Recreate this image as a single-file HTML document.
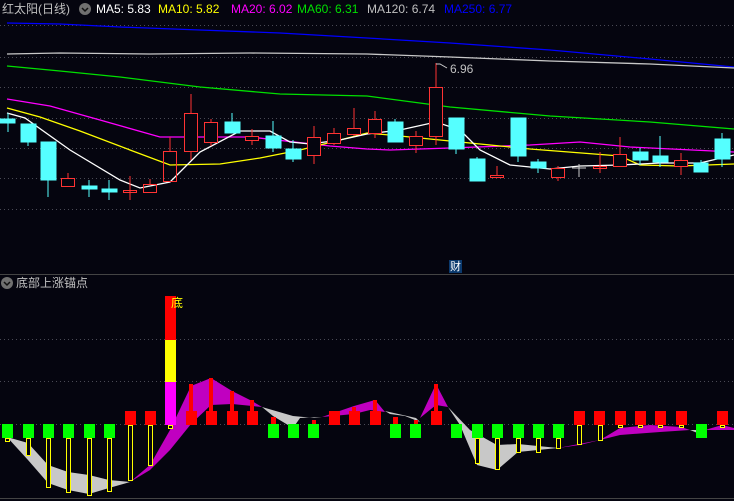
<!DOCTYPE html>
<html><head><meta charset="utf-8"><style>
html,body{margin:0;padding:0;background:#05050f;}
body{width:734px;height:501px;overflow:hidden;position:relative;font-family:"Liberation Sans","Noto Sans CJK SC",sans-serif;}
.t{position:absolute;font-size:12px;line-height:14px;white-space:nowrap;}
</style></head><body>
<svg width="734" height="501" style="position:absolute;left:0;top:0" shape-rendering="crispEdges">
<g stroke="#4a4a55" stroke-dasharray="1,3" stroke-width="1">
<line x1="0" y1="25.5" x2="734" y2="25.5"/><line x1="0" y1="57.5" x2="734" y2="57.5"/>
<line x1="0" y1="87.5" x2="734" y2="87.5"/><line x1="0" y1="118.5" x2="734" y2="118.5"/>
<line x1="0" y1="148.5" x2="734" y2="148.5"/><line x1="0" y1="178.5" x2="734" y2="178.5"/>
<line x1="0" y1="209.5" x2="734" y2="209.5"/>
<line x1="0" y1="339.5" x2="734" y2="339.5"/><line x1="0" y1="381.5" x2="734" y2="381.5"/>
<line x1="0" y1="424.5" x2="734" y2="424.5"/>
</g>
<line x1="0" y1="274.5" x2="734" y2="274.5" stroke="#444" />
<line x1="0" y1="498.5" x2="734" y2="498.5" stroke="#444" />
<g fill="none" stroke-width="1.3" shape-rendering="auto">
<polyline stroke="#0000ff" points="7,23 60,24 120,27 200,30 280,33 367,38 450,43 550,50 650,59 734,67"/>
<polyline stroke="#c8c8c8" points="7,54 60,53 150,54 250,53 367,54 450,57 550,61 650,64 734,68"/>
<polyline stroke="#00e000" points="7,66 60,71 120,77 200,87 280,94 367,96 450,107 550,116 650,122 734,129"/>
<polyline stroke="#ff00ff" points="7,99 50,106 100,120 160,137 250,137 330,146 367,149 390,150 450,148 530,145 580,142 630,147 734,152"/>
<polyline stroke="#ffff00" points="7,108 40,117 80,131 130,150 170,165 220,164 260,158 300,150 340,140 367,133 400,136 430,139 470,143 530,149 620,156 640,165 680,166 734,164"/>
<polyline stroke="#ffffff" points="7,113 25,118 70,150 120,180 140,188 170,182 200,152 240,131 270,131 290,142 310,144 340,140 367,134 400,130 436,122 460,130 480,150 510,165 550,169 580,166 620,165 660,163 700,163 734,155"/>
</g>
<g stroke-width="1">
<!-- cyan candles -->
<g stroke="#55ffff" fill="#55ffff">
<line x1="8" y1="113" x2="8" y2="132"/><rect x="0" y="119" width="15" height="4"/>
<line x1="28" y1="124" x2="28" y2="146"/><rect x="21" y="124" width="15" height="18"/>
<line x1="48" y1="142" x2="48" y2="197"/><rect x="41" y="142" width="15" height="38"/>
<line x1="89" y1="180" x2="89" y2="197"/><rect x="82" y="186" width="15" height="3"/>
<line x1="109" y1="180" x2="109" y2="200"/><rect x="102" y="189" width="15" height="3"/>
<line x1="232" y1="113" x2="232" y2="133"/><rect x="225" y="122" width="15" height="11"/>
<line x1="273" y1="121" x2="273" y2="152"/><rect x="266" y="136" width="15" height="12"/>
<line x1="293" y1="140" x2="293" y2="162"/><rect x="286" y="149" width="15" height="10"/>
<line x1="395" y1="119" x2="395" y2="142"/><rect x="388" y="122" width="15" height="20"/>
<line x1="456" y1="118" x2="456" y2="154"/><rect x="449" y="118" width="15" height="31"/>
<line x1="477" y1="157" x2="477" y2="181"/><rect x="470" y="159" width="15" height="22"/>
<line x1="518" y1="118" x2="518" y2="162"/><rect x="511" y="118" width="15" height="38"/>
<line x1="538" y1="159" x2="538" y2="173"/><rect x="531" y="162" width="15" height="6"/>
<line x1="640" y1="148" x2="640" y2="165"/><rect x="633" y="152" width="15" height="8"/>
<line x1="660" y1="136" x2="660" y2="167"/><rect x="653" y="156" width="15" height="6"/>
<line x1="701" y1="160" x2="701" y2="172"/><rect x="694" y="163" width="14" height="9"/>
<line x1="722" y1="133" x2="722" y2="167"/><rect x="715" y="139" width="15" height="20"/>
</g>
<!-- red candles -->
<g stroke="#ff3333" fill="none">
<line x1="68" y1="173" x2="68" y2="178"/><rect x="61.5" y="178.5" width="13" height="8"/>
<line x1="130" y1="176" x2="130" y2="200"/><rect x="123.5" y="190.5" width="13" height="2"/>
<line x1="150" y1="179" x2="150" y2="184"/><rect x="143.5" y="184.5" width="13" height="8"/>
<line x1="170" y1="137" x2="170" y2="151"/><rect x="163.5" y="151.5" width="13" height="30"/>
<line x1="191" y1="94" x2="191" y2="160"/><rect x="184.5" y="113.5" width="13" height="38" fill="#05050f"/>
<line x1="211" y1="119" x2="211" y2="146"/><rect x="204.5" y="122.5" width="13" height="20" fill="#05050f"/>
<line x1="252" y1="129" x2="252" y2="145"/><rect x="245.5" y="136.5" width="13" height="4" fill="#05050f"/>
<line x1="314" y1="126" x2="314" y2="164"/><rect x="307.5" y="137.5" width="13" height="18" fill="#05050f"/>
<line x1="334" y1="128" x2="334" y2="145"/><rect x="327.5" y="133.5" width="13" height="10" fill="#05050f"/>
<line x1="354" y1="108" x2="354" y2="136"/><rect x="347.5" y="128.5" width="13" height="6" fill="#05050f"/>
<line x1="375" y1="111" x2="375" y2="138"/><rect x="368.5" y="119.5" width="13" height="14" fill="#05050f"/>
<line x1="416" y1="131" x2="416" y2="153"/><rect x="409.5" y="136.5" width="13" height="9" fill="#05050f"/>
<line x1="436" y1="63" x2="436" y2="145"/><rect x="429.5" y="87.5" width="13" height="49" fill="#05050f"/>
<line x1="497" y1="166" x2="497" y2="175"/><rect x="490.5" y="175.5" width="13" height="2"/>
<line x1="558" y1="166" x2="558" y2="181"/><rect x="551.5" y="168.5" width="13" height="9" fill="#05050f"/>
<line x1="600" y1="152" x2="600" y2="173"/><rect x="593.5" y="166.5" width="13" height="2"/>
<line x1="620" y1="137" x2="620" y2="167"/><rect x="613.5" y="154.5" width="13" height="12" fill="#05050f"/>
<line x1="681" y1="153" x2="681" y2="175"/><rect x="674.5" y="160.5" width="13" height="6" fill="#05050f"/>
</g>
<line x1="579" y1="164" x2="579" y2="177" stroke="#ccc"/><line x1="572" y1="168" x2="586" y2="168" stroke="#ccc"/>
</g>
<polyline points="436,64 440,64 447,68" fill="none" stroke="#ccc" shape-rendering="auto"/>
<rect x="449" y="260" width="13" height="13" fill="#0b3a6e"/>

<!-- bottom panel fills -->
<g shape-rendering="auto">
<polygon fill="#c8c8c8" points="7,437 28,443 48,465 68,472 89,475 109,480 130,482 109,488 89,494 68,490 48,483 28,460"/>
<polygon fill="#c000c0" points="130,482 150,465 170,430 191,386 211,378 232,391 252,401 262,407 232,404 211,405 191,424 170,450 150,470"/>
<polygon fill="#c8c8c8" points="262,407 293,416 314,418 322,417 300,418 293,428 273,416"/>
<polygon fill="#c000c0" points="322,417 354,406 375,400 385,412 370,410 354,414"/>
<polygon fill="#c8c8c8" points="385,411 416,418 420,422 405,416 390,414"/>
<polygon fill="#c000c0" points="420,418 436,384 448,407 436,405"/>
<polygon fill="#c8c8c8" points="448,407 470,430 497,445 518,444 558,448 518,452 497,470 477,465 460,425"/>
<polygon fill="#c000c0" points="558,448 600,440 620,428 650,425 681,427 690,430 660,432 620,435 580,445"/>
<polygon fill="#c8c8c8" points="690,430 705,430 700,434"/>
<polygon fill="#c000c0" points="705,430 722,425 734,428 734,430 715,430"/>
</g>
<!-- yellow hollow bars -->
<g fill="#05050f" stroke="#ffff00" stroke-width="1">
<rect x="5.5" y="438.5" width="4" height="3"/>
<rect x="26.5" y="438.5" width="4" height="17"/>
<rect x="46.5" y="438.5" width="4" height="49"/>
<rect x="66.5" y="438.5" width="4" height="54"/>
<rect x="87.5" y="438.5" width="4" height="57"/>
<rect x="107.5" y="438.5" width="4" height="53"/>
<rect x="128.5" y="425.5" width="4" height="55"/>
<rect x="148.5" y="425.5" width="4" height="40"/>
<rect x="168.5" y="425.5" width="4" height="3"/>
<rect x="475.5" y="438.5" width="4" height="25"/>
<rect x="495.5" y="438.5" width="4" height="31"/>
<rect x="516.5" y="438.5" width="4" height="14"/>
<rect x="536.5" y="438.5" width="4" height="14"/>
<rect x="556.5" y="438.5" width="4" height="10"/>
<rect x="577.5" y="425.5" width="4" height="19"/>
<rect x="598.5" y="425.5" width="4" height="15"/>
<rect x="618.5" y="425.5" width="4" height="2"/>
<rect x="638.5" y="425.5" width="4" height="2"/>
<rect x="658.5" y="425.5" width="4" height="2"/>
<rect x="679.5" y="425.5" width="4" height="2"/>
<rect x="720.5" y="425.5" width="4" height="2"/>
</g>
<!-- big bar -->
<rect x="165" y="382" width="11" height="43" fill="#ff00ff"/>
<rect x="165" y="340" width="11" height="42" fill="#ffff00"/>
<rect x="165" y="296" width="11" height="44" fill="#ff0000"/>
<!-- red boxes & bars -->
<g fill="#ff0000">
<rect x="125" y="411" width="11" height="14"/><rect x="145" y="411" width="11" height="14"/>
<rect x="186" y="411" width="11" height="14"/><rect x="189" y="384" width="4" height="27"/>
<rect x="206" y="411" width="11" height="14"/><rect x="209" y="378" width="4" height="33"/>
<rect x="227" y="411" width="11" height="14"/><rect x="230" y="391" width="4" height="20"/>
<rect x="247" y="411" width="11" height="14"/><rect x="250" y="400" width="4" height="11"/>
<rect x="271" y="417" width="5" height="7"/><rect x="312" y="420" width="4" height="4"/>
<rect x="329" y="411" width="11" height="14"/>
<rect x="349" y="411" width="11" height="14"/><rect x="352" y="407" width="4" height="4"/>
<rect x="370" y="411" width="11" height="14"/><rect x="373" y="400" width="4" height="11"/>
<rect x="393" y="417" width="5" height="7"/><rect x="414" y="420" width="4" height="4"/>
<rect x="431" y="411" width="11" height="14"/><rect x="434" y="384" width="4" height="27"/>
<rect x="574" y="411" width="11" height="14"/><rect x="594" y="411" width="11" height="14"/>
<rect x="615" y="411" width="11" height="14"/><rect x="635" y="411" width="11" height="14"/>
<rect x="655" y="411" width="11" height="14"/><rect x="676" y="411" width="11" height="14"/>
<rect x="717" y="411" width="11" height="14"/>
</g>
<g fill="#00ff00">
<rect x="2" y="424" width="11" height="14"/><rect x="23" y="424" width="11" height="14"/>
<rect x="43" y="424" width="11" height="14"/><rect x="63" y="424" width="11" height="14"/>
<rect x="84" y="424" width="11" height="14"/><rect x="104" y="424" width="11" height="14"/>
<rect x="268" y="424" width="11" height="14"/><rect x="288" y="424" width="11" height="14"/>
<rect x="308" y="424" width="11" height="14"/>
<rect x="390" y="424" width="11" height="14"/><rect x="410" y="424" width="11" height="14"/>
<rect x="451" y="424" width="11" height="14"/><rect x="472" y="424" width="11" height="14"/>
<rect x="492" y="424" width="11" height="14"/><rect x="513" y="424" width="11" height="14"/>
<rect x="533" y="424" width="11" height="14"/><rect x="553" y="424" width="11" height="14"/>
<rect x="696" y="424" width="11" height="14"/>
</g>
<!-- chevron icons -->
<g shape-rendering="auto">
<circle cx="85" cy="9" r="6" fill="#707070"/><polyline points="82,8 85,11 88,8" fill="none" stroke="#111" stroke-width="1.5"/>
<circle cx="7" cy="283" r="6" fill="#707070"/><polyline points="4,282 7,285 10,282" fill="none" stroke="#111" stroke-width="1.5"/>
</g>
</svg>
<div class="t" style="left:2px;top:2px;color:#c0c0c0">红太阳(日线)</div>
<div class="t" style="left:96px;top:2px;color:#ffffff">MA5: 5.83</div>
<div class="t" style="left:158px;top:2px;color:#ffff00">MA10: 5.82</div>
<div class="t" style="left:231px;top:2px;color:#ff00ff">MA20: 6.02</div>
<div class="t" style="left:297px;top:2px;color:#00e000">MA60: 6.31</div>
<div class="t" style="left:367px;top:2px;color:#c0c0c0">MA120: 6.74</div>
<div class="t" style="left:444px;top:2px;color:#0000ff">MA250: 6.77</div>
<div class="t" style="left:450px;top:62px;color:#c0c0c0">6.96</div>
<div class="t" style="left:449px;top:260px;color:#fff;font-size:11px;width:13px;text-align:center">财</div>
<div class="t" style="left:16px;top:276px;color:#c0c0c0">底部上涨锚点</div>
<div class="t" style="left:171px;top:296px;color:#ffff00">底</div>
</body></html>
